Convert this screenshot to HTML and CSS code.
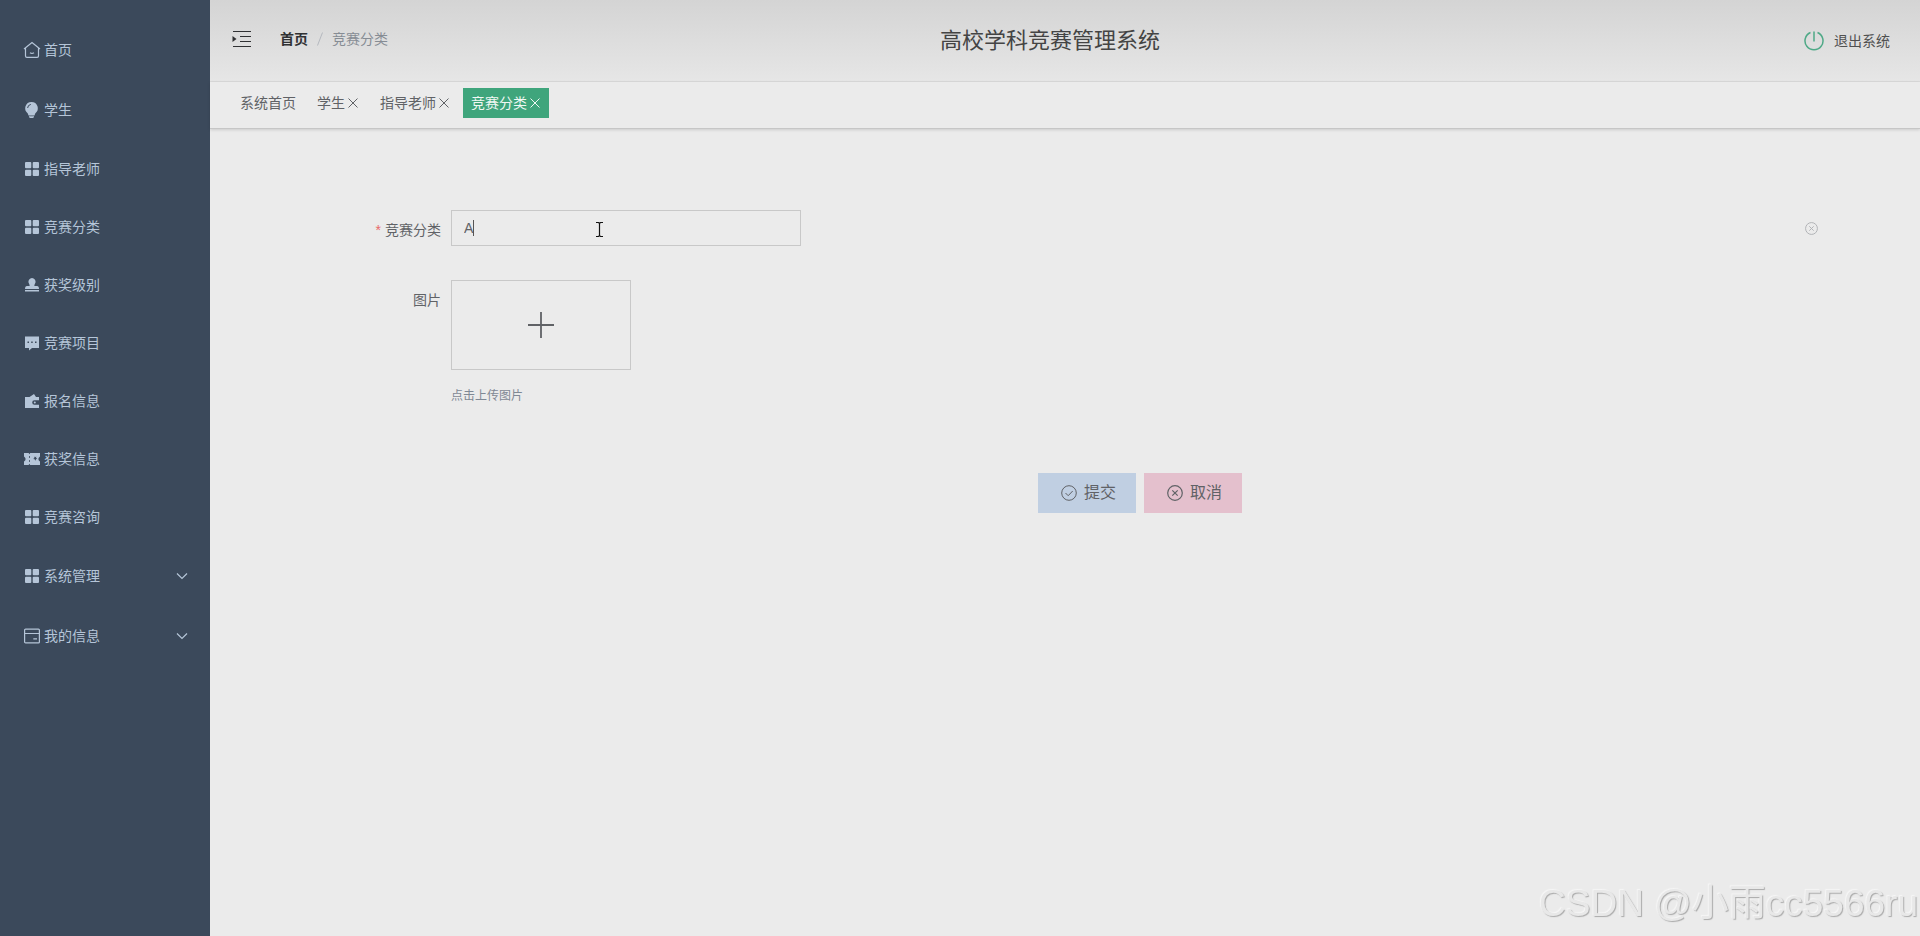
FILE: index.html
```html
<!DOCTYPE html>
<html lang="zh-CN">
<head>
<meta charset="utf-8">
<title>高校学科竞赛管理系统</title>
<link rel="stylesheet" href="styles.css">
</head>
<body>
<svg class="sprite" aria-hidden="true">
  <symbol id="grid" viewBox="0 0 16 16"><rect x="1" y="1" width="6.300" height="6.300" rx="1"/><rect x="8.700" y="1" width="6.300" height="6.300" rx="1"/><rect x="1" y="8.700" width="6.300" height="6.300" rx="1"/><rect x="8.700" y="8.700" width="6.300" height="6.300" rx="1"/></symbol>
  <symbol id="chevron" viewBox="0 0 12 12"><path d="M1 3.500l5 5 5-5" fill="none" stroke="currentColor" stroke-width="1.200"/></symbol>
  <symbol id="cross" viewBox="0 0 12 12"><path d="M1.500 1.500l9 9M10.500 1.500l-9 9" fill="none" stroke="currentColor" stroke-width="1"/></symbol>
  <symbol id="circle-cross" viewBox="0 0 16 16"><g fill="none" stroke="currentColor" stroke-width="1.200"><circle cx="8" cy="8" r="7.300"/><path d="M5.300 5.300l5.400 5.400M10.700 5.300l-5.400 5.400"/></g></symbol>
</svg>
<div class="layout">
  <nav class="sidebar">
    <ul class="menu">
      <li><a class="item tall" href="#"><svg class="icon" viewBox="0 0 16 16"><g fill="none" stroke="currentColor" stroke-width="1.200"><path d="M0 7L8 .6 16 7M1.500 5.800V14q0 1.400 1.400 1.400h10.200q1.400 0 1.400-1.400V5.800"/><path d="M6 10.800q2 1.300 4 0"/></g></svg>首页</a></li>
      <li><a class="item tall" href="#"><svg class="icon" viewBox="0 0 16 16"><path d="M7.500 0a6.300 6.300 0 0 1 3.700 11.400L10.500 13.500h-6L3.800 11.400A6.300 6.300 0 0 1 7.500 0zM5 14.300h5V15q-.6 1-1.300 1H6.300Q5.500 16 5 15z"/><path d="M3.600 6a4 4 0 0 1 3.200-3.600" fill="none" stroke="#3b495b"/></svg>学生</a></li>
      <li><a class="item" href="#"><svg class="icon"><use href="#grid"/></svg>指导老师</a></li>
      <li><a class="item" href="#"><svg class="icon"><use href="#grid"/></svg>竞赛分类</a></li>
      <li><a class="item" href="#"><svg class="icon" viewBox="0 0 16 16"><path d="M8 1a3.700 3.700 0 0 1 3.500 4.500Q10.300 7.500 10.300 9H13q2 0 2 3H1q0-3 2-3h2.700q0-1.500-1.200-3.500A3.700 3.700 0 0 1 8 1zM1 13h14v1.500H1z"/></svg>获奖级别</a></li>
      <li><a class="item" href="#"><svg class="icon" viewBox="0 0 16 16"><path fill-rule="evenodd" d="M1 1.500h14V13H8l-3 2.500V13H1zM3.500 6.500v1.500h1.500V6.500zM7.200 6.500v1.500h1.500V6.500zM11 6.500v1.500h1.500V6.500z"/></svg>竞赛项目</a></li>
      <li><a class="item" href="#"><svg class="icon" viewBox="0 0 16 16"><path d="M1 4h4.500L10 1l2 3h3v3.200h-4.500a2.300 2.300 0 0 0 0 4.600H15V15H1z"/><circle cx="10.800" cy="9.500" r="1"/></svg>报名信息</a></li>
      <li><a class="item" href="#"><svg class="icon" viewBox="0 0 16 16"><path fill-rule="evenodd" d="M0 2h4.600l.8 1.200L6.200 2H16v3.500q-1.600 1-1.600 2.500t1.600 2.500V14H6.200l-.8-1.200-.8 1.200H0v-3.500Q1.600 9.500 1.600 8T0 5.500zM5 5v2h.8V5zM5 9v2h.8V9zM10 5.500l.5 1.400-1.300 1 1.500.3.600 1.500.7-1.500 1.200-.5-1.100-.8.100-1.300-1.100.7z"/></svg>获奖信息</a></li>
      <li><a class="item" href="#"><svg class="icon"><use href="#grid"/></svg>竞赛咨询</a></li>
      <li><a class="item tall" href="#"><svg class="icon"><use href="#grid"/></svg>系统管理<svg class="arrow"><use href="#chevron"/></svg></a></li>
      <li><a class="item tall" href="#"><svg class="icon" viewBox="0 0 16 16"><g fill="none" stroke="currentColor" stroke-width="1.200"><rect x=".6" y="1.100" width="14.800" height="13.800" rx="1"/><path d="M.6 5.500h14.800M9.300 10.800H13"/></g></svg>我的信息<svg class="arrow"><use href="#chevron"/></svg></a></li>
    </ul>
  </nav>
  <div class="page">
    <header class="header">
      <div class="header-left">
        <button class="fold" type="button" aria-label="折叠菜单"><svg viewBox="0 0 20 18"><path d="M1 1.500h18M8 6.500h11M8 11.500h11M1 16.500h18" fill="none" stroke="currentColor" stroke-width="1"/><path d="M.5 6l4 3-4 3z"/></svg></button>
        <div class="crumbs"><a class="crumb-home" href="#">首页</a><svg class="slash" viewBox="0 0 6 14"><path d="M.5 13.500l5-13" fill="none" stroke="currentColor"/></svg><span>竞赛分类</span></div>
      </div>
      <h1 class="title">高校学科竞赛管理系统</h1>
      <button class="logout" type="button"><svg viewBox="0 0 20 20"><path d="M6.500 1.500a9 9 0 1 0 7 0M10 .5v10" fill="none" stroke="currentColor" stroke-width="1.500"/></svg>退出系统</button>
    </header>
    <nav class="tabs">
      <a class="tab" href="#">系统首页</a>
      <a class="tab" href="#">学生<svg><use href="#cross"/></svg></a>
      <a class="tab" href="#">指导老师<svg><use href="#cross"/></svg></a>
      <a class="tab active" href="#">竞赛分类<svg><use href="#cross"/></svg></a>
    </nav>
    <main class="main">
      <form class="form">
        <label class="label required" for="category">竞赛分类</label>
        <div class="field">
          <input class="input" id="category" type="text" value="A">
          <span class="caret"></span>
          <svg class="pointer" viewBox="0 0 9 17"><path d="M1 1.500h2.500l1 1 1-1H8M4.500 2v13M1 15.500h2.500l1-1 1 1H8" fill="none" stroke="#111" stroke-width="1.200"/></svg>
          <button class="clear" type="button" aria-label="清空"><svg><use href="#circle-cross"/></svg></button>
        </div>
        <label class="label" for="upload">图片</label>
        <div class="upload-field">
          <button class="upload" id="upload" type="button"><svg viewBox="0 0 26 26"><path d="M13 0v26M0 13h26" fill="none" stroke="currentColor" stroke-width="1.800"/></svg></button>
          <p class="tip">点击上传图片</p>
        </div>
        <div class="actions">
          <button class="btn submit" type="button"><svg viewBox="0 0 16 16"><g fill="none" stroke="currentColor"><circle cx="8" cy="8" r="7.300"/><path d="M4.500 8l2.700 2.700 4.500-4.700"/></g></svg>提交</button>
          <button class="btn cancel" type="button"><svg><use href="#circle-cross"/></svg>取消</button>
        </div>
      </form>
    </main>
  </div>
</div>
<div class="watermark">CSDN @小雨cc5566ru</div>
</body>
</html>
```

FILE: styles.css
```css
* {
  box-sizing: border-box;
}

body {
  margin: 0;
  background: #ebebeb;
  color: #606266;
  font: 14px/20px "Liberation Sans", "Noto Sans CJK SC", sans-serif;
}

a {
  color: inherit;
  text-decoration: none;
}

button {
  padding: 0;
  border: 0;
  background: none;
  color: inherit;
  font: inherit;
}

svg {
  display: block;
  flex: none;
  fill: currentColor;
}

.sprite {
  position: absolute;
  width: 0;
  height: 0;
}

.layout {
  display: flex;
  min-height: 100vh;
}

.sidebar {
  flex: none;
  width: 210px;
  padding-top: 20px;
  background: #3b495b;
  color: #b5c5d8;
}

.menu {
  margin: 0;
  padding: 0;
  list-style: none;
}

.item {
  display: flex;
  align-items: center;
  gap: 4px;
  height: 58px;
  padding: 0 22px 0 24px;
}

.tall {
  height: 60px;
}

.icon {
  width: 16px;
  height: 16px;
  overflow: visible;
}

.arrow {
  width: 12px;
  height: 12px;
  margin-left: auto;
}

.page {
  flex: 1;
  min-width: 0;
}

.header {
  display: grid;
  grid-template-columns: 1fr auto 1fr;
  align-items: center;
  height: 82px;
  padding-right: 30px;
  border-bottom: 1px solid #dadada;
  background: linear-gradient(#d4d4d4, #e6e6e6);
}

.header-left {
  display: flex;
  align-items: center;
  gap: 28px;
  padding: 0 0 4px 22px;
}

.fold svg {
  width: 20px;
  height: 18px;
  color: #303133;
}

.crumbs {
  display: flex;
  align-items: center;
  gap: 9px;
  color: #868c94;
}

.crumb-home {
  color: #303133;
  font-weight: 700;
}

.slash {
  width: 6px;
  height: 14px;
  color: #b4b8be;
}

.title {
  margin: 0;
  color: #444;
  font-size: 22px;
  font-weight: 400;
  line-height: 30px;
}

.logout {
  display: flex;
  align-items: center;
  justify-self: end;
  gap: 10px;
  color: #505050;
}

.logout svg {
  width: 20px;
  height: 20px;
  color: #4fa987;
}

.tabs {
  display: flex;
  align-items: center;
  gap: 5px;
  height: 47px;
  padding: 0 22px 4px;
  border-bottom: 1px solid #c6c6c6;
  box-shadow: 0 1px 3px #00000022;
}

.tab {
  display: flex;
  align-items: center;
  gap: 2px;
  height: 30px;
  padding: 0 8px;
}

.tab svg {
  width: 12px;
  height: 12px;
}

.active {
  background: #3fa57c;
  color: #f0f8f4;
}

.main {
  padding: 81px 91px 30px;
}

.form {
  display: grid;
  grid-template-columns: 150px 1fr;
}

.label {
  padding: 10px 10px 0 0;
  text-align: right;
}

.required::before {
  margin-right: 4px;
  color: #e86b6b;
  content: "*";
}

.field {
  position: relative;
  display: flex;
  align-items: center;
  height: 36px;
  margin-bottom: 34px;
}

.input {
  width: 350px;
  height: 36px;
  padding: 0 12px;
  border: 1px solid #c8c8c8;
  background: none;
  color: #606266;
  font: inherit;
}

.caret {
  position: absolute;
  top: 10px;
  left: 22px;
  width: 1px;
  height: 16px;
  background: #555;
}

.pointer {
  position: absolute;
  top: 11px;
  left: 144px;
  width: 9px;
  height: 17px;
}

.clear {
  margin: 0 11px 0 auto;
  color: #b0b2b5;
}

.clear svg {
  width: 13px;
  height: 13px;
}

.upload {
  display: flex;
  align-items: center;
  justify-content: center;
  width: 180px;
  height: 90px;
  border: 1px solid #c8c8c8;
}

.upload svg {
  width: 26px;
  height: 26px;
}

.tip {
  margin: 16px 0 67px;
  color: #7f8894;
  font-size: 12px;
}

.actions {
  display: flex;
  grid-column: 2;
  justify-content: center;
  gap: 8px;
}

.btn {
  display: flex;
  align-items: center;
  gap: 7px;
  width: 98px;
  height: 40px;
  padding-left: 23px;
  font-size: 16px;
}

.btn svg {
  width: 16px;
  height: 16px;
}

.submit {
  background: #c0cfe2;
}

.cancel {
  background: #e4c0cd;
}

.watermark {
  position: fixed;
  right: 2px;
  bottom: 8px;
  color: #e8e8e8;
  font-size: 37px;
  line-height: 48px;
  text-shadow: 1px 1px 1px #aaa, -1px -1px 1px #f6f6f6;
}
```
